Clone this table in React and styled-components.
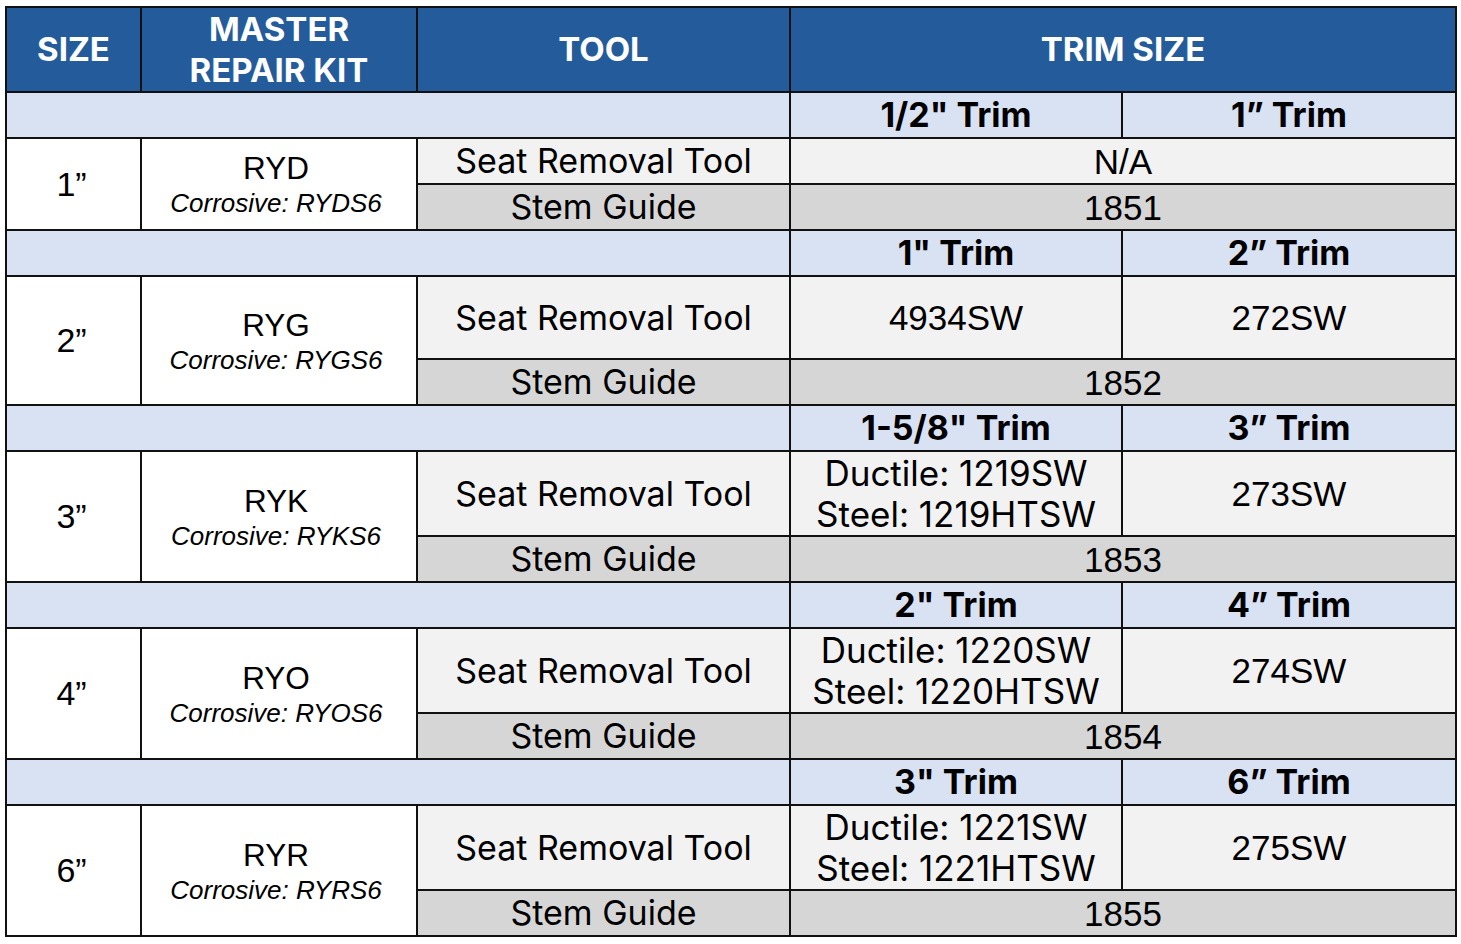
import React from 'react';
import styled, { createGlobalStyle } from 'styled-components';

const GlobalStyle = createGlobalStyle`
  body {
    margin: 0;
    background: #ffffff;
    font-family: "Liberation Sans", Arial, sans-serif;
  }
`;

const Table = styled.table`
  border-collapse: collapse;
  table-layout: fixed;
  width: 1450px;
  margin: 6px 0 0 5px;
  color: #000;
`;

const Cell = styled.td`
  border: 2px solid #111;
  padding: 0;
  text-align: center;
  vertical-align: middle;
`;

const HeadCell = styled.th`
  border: 2px solid #111;
  padding: 0;
  background: #245c9b;
  color: #fff;
  font-family: Inter, "Liberation Sans", sans-serif;
  font-weight: 700;
  font-size: 33px;
  line-height: 41px;
  text-align: center;
  vertical-align: middle;
`;

const HeadRow = styled.tr`
  height: 85px;
`;

const SubRow = styled.tr`
  height: 46px;
  background: #d9e2f3;
`;

const TrimHead = styled(Cell)`
  font-family: Inter, "Liberation Sans", sans-serif;
  font-weight: 700;
  font-size: 34px;
  line-height: 40px;
`;

const SeatRow = styled.tr`
  height: ${p => p.$h}px;
  background: #f2f2f2;
`;

const StemRow = styled.tr`
  height: 46px;
  background: #d6d6d6;
`;

const SizeCell = styled(Cell)`
  background: #fff;
  font-size: 34px;
  padding-right: 4px;
`;

const KitCell = styled(Cell)`
  background: #fff;
  padding-right: 6px;
`;

const KitName = styled.div`
  font-size: 31.5px;
  line-height: 38px;
`;

const Corrosive = styled.div`
  font-style: italic;
  font-size: 26px;
  line-height: 32px;
`;

const ToolCell = styled(Cell)`
  font-family: Inter, "Liberation Sans", sans-serif;
  font-size: 34px;
  line-height: 40px;
`;

const ValueCell = styled(Cell)`
  font-family: ${p => (p.$inter ? 'Inter, "Liberation Sans", sans-serif' : '"Liberation Sans", Arial, sans-serif')};
  font-size: 35px;
  line-height: 41px;
`;

const groups = [
  {
    size: '1”', kit: 'RYD', corr: 'RYDS6', trims: ['1/2" Trim', '1” Trim'],
    seat: null, na: 'N/A', h: 46, stem: '1851',
  },
  {
    size: '2”', kit: 'RYG', corr: 'RYGS6', trims: ['1" Trim', '2” Trim'],
    seat: [['4934SW'], '272SW'], h: 83, stem: '1852',
  },
  {
    size: '3”', kit: 'RYK', corr: 'RYKS6', trims: ['1-5/8" Trim', '3” Trim'],
    seat: [['Ductile: 1219SW', 'Steel: 1219HTSW'], '273SW'], h: 85, stem: '1853',
  },
  {
    size: '4”', kit: 'RYO', corr: 'RYOS6', trims: ['2" Trim', '4” Trim'],
    seat: [['Ductile: 1220SW', 'Steel: 1220HTSW'], '274SW'], h: 85, stem: '1854',
  },
  {
    size: '6”', kit: 'RYR', corr: 'RYRS6', trims: ['3" Trim', '6” Trim'],
    seat: [['Ductile: 1221SW', 'Steel: 1221HTSW'], '275SW'], h: 85, stem: '1855',
  },
];

const Group = ({ g }) => (
  <>
    <SubRow>
      <Cell colSpan={3} />
      <TrimHead>{g.trims[0]}</TrimHead>
      <TrimHead>{g.trims[1]}</TrimHead>
    </SubRow>
    <SeatRow $h={g.h}>
      <SizeCell rowSpan={2}>{g.size}</SizeCell>
      <KitCell rowSpan={2}>
        <KitName>{g.kit}</KitName>
        <Corrosive>Corrosive: {g.corr}</Corrosive>
      </KitCell>
      <ToolCell>Seat Removal Tool</ToolCell>
      {g.seat ? (
        <>
          <ValueCell $inter={g.seat[0].length > 1}>
            {g.seat[0].map(line => (
              <div key={line}>{line}</div>
            ))}
          </ValueCell>
          <ValueCell>{g.seat[1]}</ValueCell>
        </>
      ) : (
        <ValueCell colSpan={2}>{g.na}</ValueCell>
      )}
    </SeatRow>
    <StemRow>
      <ToolCell>Stem Guide</ToolCell>
      <ValueCell colSpan={2}>{g.stem}</ValueCell>
    </StemRow>
  </>
);

export default function App() {
  return (
    <>
      <GlobalStyle />
      <Table>
        <colgroup>
          <col style={{ width: 135 }} />
          <col style={{ width: 276 }} />
          <col style={{ width: 373 }} />
          <col style={{ width: 332 }} />
          <col style={{ width: 334 }} />
        </colgroup>
        <thead>
          <HeadRow>
            <HeadCell>SIZE</HeadCell>
            <HeadCell>
              MASTER
              <br />
              REPAIR KIT
            </HeadCell>
            <HeadCell>TOOL</HeadCell>
            <HeadCell colSpan={2}>TRIM SIZE</HeadCell>
          </HeadRow>
        </thead>
        <tbody>
          {groups.map(g => (
            <Group key={g.kit} g={g} />
          ))}
        </tbody>
      </Table>
    </>
  );
}
